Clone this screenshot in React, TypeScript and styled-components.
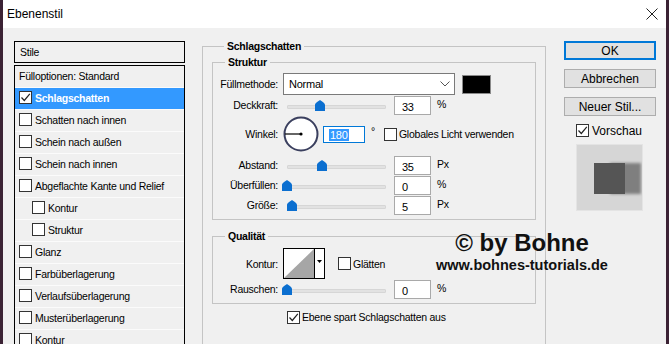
import React from "react";
import styled, {createGlobalStyle} from "styled-components";

const GlobalStyle = createGlobalStyle`
  html, body {
    margin: 0;
    padding: 0;
  }
  body {
    font-family: "Liberation Sans", Arial, sans-serif;
    background: #f0f0f0;
  }
`;

type StyleItem = {name: string, indent?: boolean, checked?: boolean, selected?: boolean};

const styleItems: StyleItem[] = [
  {name: "Schlagschatten", checked: true, selected: true},
  {name: "Schatten nach innen"},
  {name: "Schein nach außen"},
  {name: "Schein nach innen"},
  {name: "Abgeflachte Kante und Relief"},
  {name: "Kontur", indent: true},
  {name: "Struktur", indent: true},
  {name: "Glanz"},
  {name: "Farbüberlagerung"},
  {name: "Verlaufsüberlagerung"},
  {name: "Musterüberlagerung"},
  {name: "Kontur"},
];

const CheckBox = ({checked}: {checked?: boolean}) => (
  <StyledCheckBox>
    {checked && (
      <svg width="11" height="11" viewBox="0 0 11 11">
        <path d="M1.5 5.5 L4.3 8.5 L9.8 1.8" fill="none" stroke="#222" strokeWidth="1.2" />
      </svg>
    )}
  </StyledCheckBox>
);

const Slider = ({value}: {value: number}) => (
  <StyledSlider>
    <StyledTrack />
    <StyledThumb style={{left: 4 + value / 100 * 99 - 5}}>
      <svg width="10" height="11" viewBox="0 0 10 11">
        <path d="M5 0 C6.5 1 10 3 10 5 V11 H0 V5 C0 3 3.5 1 5 0 Z" fill="#0b6fd0" />
      </svg>
    </StyledThumb>
  </StyledSlider>
);

const SliderRow = ({label, value, unit}: {label: string, value: number, unit: string}) => (
  <StyledRow $height={20}>
    <StyledLabel>{label}</StyledLabel>
    <Slider value={value} />
    <StyledNumber>{value}</StyledNumber>
    <StyledUnit $top={3}>{unit}</StyledUnit>
  </StyledRow>
);

export default function App() {
  return (
    <StyledWindow>
      <GlobalStyle />
      <StyledEdge />
      <StyledDialog>
        <StyledTitleBar>
          <span>Ebenenstil</span>
          <svg width="12" height="12" viewBox="0 0 12 12">
            <path d="M0.5 0.5 L11.5 11.5 M11.5 0.5 L0.5 11.5" stroke="#222" strokeWidth="1" />
          </svg>
        </StyledTitleBar>
        <StyledBody>
          <StyledStyles>
            <StyledStylesHeader>Stile</StyledStylesHeader>
            <StyledList>
              <StyledListRow>Fülloptionen: Standard</StyledListRow>
              {styleItems.map((item, i) => (
                <StyledListRow key={i} $indent={item.indent} $selected={item.selected}>
                  <CheckBox checked={item.checked} />
                  {item.name}
                </StyledListRow>
              ))}
            </StyledList>
          </StyledStyles>

          <StyledMainGroup>
            <StyledLegend>Schlagschatten</StyledLegend>
            <StyledSubGroup $marginTop={2} $paddingTop={4}>
              <StyledLegend>Struktur</StyledLegend>
              <StyledRow $height={22}>
                <StyledLabel>Füllmethode:</StyledLabel>
                <StyledSelect>
                  Normal
                  <svg width="10" height="6" viewBox="0 0 10 6">
                    <path d="M0.5 0.5 L5 5 L9.5 0.5" fill="none" stroke="#555" strokeWidth="1" />
                  </svg>
                </StyledSelect>
                <StyledSwatch />
              </StyledRow>
              <SliderRow label="Deckkraft:" value={33} unit="%" />
              <StyledRow $height={36} $marginTop={1} $marginBottom={3}>
                <StyledLabel>Winkel:</StyledLabel>
                <StyledDial>
                  <svg width="36" height="36" viewBox="0 0 36 36">
                    <circle cx="18" cy="18" r="16.5" fill="#fff" stroke="#3a3f5e" strokeWidth="2" />
                    <path d="M2 18 H18" stroke="#000" strokeWidth="1.2" />
                    <circle cx="18" cy="18" r="1.6" fill="#000" />
                  </svg>
                </StyledDial>
                <StyledAngleInput>
                  <StyledSelection>180</StyledSelection>
                </StyledAngleInput>
                <StyledUnit $top={9}>°</StyledUnit>
                <StyledCheckLabel $marginLeft={9}>
                  <CheckBox />
                  Globales Licht verwenden
                </StyledCheckLabel>
              </StyledRow>
              <SliderRow label="Abstand:" value={35} unit="Px" />
              <SliderRow label="Überfüllen:" value={0} unit="%" />
              <SliderRow label="Größe:" value={5} unit="Px" />
            </StyledSubGroup>

            <StyledSubGroup $marginTop={9} $paddingTop={5}>
              <StyledLegend>Qualität</StyledLegend>
              <StyledRow $height={31}>
                <StyledLabel>Kontur:</StyledLabel>
                <svg width="42" height="31" viewBox="0 0 42 31">
                  <rect x="0.5" y="0.5" width="41" height="30" fill="#fff" stroke="#000" />
                  <polygon points="1,30 31,1 31,30" fill="#a6a6a6" />
                  <path d="M31.5 0.5 V30.5" stroke="#000" />
                  <polygon points="34,12 39,12 36.5,15" fill="#000" />
                </svg>
                <StyledCheckLabel $marginLeft={13}>
                  <CheckBox />
                  Glätten
                </StyledCheckLabel>
              </StyledRow>
              <SliderRow label="Rauschen:" value={0} unit="%" />
            </StyledSubGroup>

            <StyledCheckLabel $marginLeft={75} $marginTop={4}>
              <CheckBox checked />
              Ebene spart Schlagschatten aus
            </StyledCheckLabel>
          </StyledMainGroup>

          <StyledSide>
            <StyledButton $primary>OK</StyledButton>
            <StyledButton>Abbrechen</StyledButton>
            <StyledButton>Neuer Stil...</StyledButton>
            <StyledPreviewCheck>
              <CheckBox checked />
              Vorschau
            </StyledPreviewCheck>
            <StyledPreview>
              <svg width="65" height="65" viewBox="0 0 65 65">
                <defs>
                  <filter id="blur" x="-20%" y="-20%" width="140%" height="140%">
                    <feGaussianBlur stdDeviation="1.6" />
                  </filter>
                </defs>
                <rect x="0" y="0" width="65" height="65" fill="#d6d6d6" />
                <rect x="33" y="18" width="31" height="31" fill="#7f7f7f" filter="url(#blur)" />
                <rect x="17" y="18" width="31" height="31" fill="#555" />
              </svg>
            </StyledPreview>
          </StyledSide>

          <StyledWatermark>
            <StyledWatermarkTitle>© by Bohne</StyledWatermarkTitle>
            <StyledWatermarkUrl>www.bohnes-tutorials.de</StyledWatermarkUrl>
          </StyledWatermark>
        </StyledBody>
      </StyledDialog>
      <StyledEdge />
    </StyledWindow>
  );
}

const StyledWindow = styled.div`
  display: flex;
  width: 669px;
  height: 344px;
  overflow: hidden;
`;

const StyledEdge = styled.div`
  width: 3px;
  flex-shrink: 0;
  background: #3b2234;
`;

const StyledDialog = styled.div`
  flex: 1;
  display: flex;
  flex-direction: column;
  background: #f0f0f0;
`;

const StyledTitleBar = styled.div`
  height: 27px;
  flex-shrink: 0;
  background: #fff;
  display: flex;
  align-items: center;
  justify-content: space-between;
  padding: 0 8px 1px 4px;
  font-size: 12px;
  color: #000;
`;

const StyledBody = styled.div`
  position: relative;
  flex: 1;
  display: flex;
  align-items: flex-start;
  padding: 11px 0 0 11px;
  overflow: hidden;
  font-size: 10.5px;
  letter-spacing: -0.25px;
  color: #000;
`;

const StyledStyles = styled.div`
  width: 171px;
  margin-top: 2px;
  display: flex;
  flex-direction: column;
  gap: 2px;
`;

const StyledStylesHeader = styled.div`
  height: 20px;
  border: 1px solid #000;
  padding-left: 5px;
  display: flex;
  align-items: center;
`;

const StyledList = styled.div`
  border: 1px solid #000;
  border-bottom: none;
  height: 300px;
`;

const StyledListRow = styled.div<{$indent?: boolean, $selected?: boolean}>`
  box-sizing: border-box;
  height: 22px;
  padding-bottom: 2px;
  border-bottom: 1px solid #fbfbfb;
  display: flex;
  align-items: center;
  gap: 3px;
  padding-left: ${(x) => x.$indent ? 17 : 4}px;
  background: ${(x) => x.$selected ? "#3399ff" : "#f0f0f0"};
  color: ${(x) => x.$selected ? "#fff" : "#000"};
  font-weight: ${(x) => x.$selected ? "bold" : "normal"};
`;

const StyledCheckBox = styled.span`
  width: 11px;
  height: 11px;
  flex-shrink: 0;
  border: 1px solid #333;
  background: #fff;
  display: inline-flex;
  align-items: center;
  justify-content: center;
`;

const StyledMainGroup = styled.fieldset`
  box-sizing: border-box;
  width: 344px;
  height: 330px;
  margin: 0 0 0 17px;
  padding: 0 9px;
  border: 1px solid #c4c4c4;
  min-width: 0;
`;

const StyledSubGroup = styled.fieldset<{$marginTop: number, $paddingTop: number}>`
  margin: ${(x) => x.$marginTop}px 0 0 0;
  padding: ${(x) => x.$paddingTop}px 9px 4px 0;
  border: 1px solid #c4c4c4;
  min-width: 0;
`;

const StyledLegend = styled.legend`
  margin-left: 12px;
  padding: 0 3px;
  font-weight: bold;
  font-size: 10.5px;
  line-height: 14px;
`;

const StyledRow = styled.div<{$height: number, $marginTop?: number, $marginBottom?: number}>`
  height: ${(x) => x.$height}px;
  margin-top: ${(x) => x.$marginTop ?? 0}px;
  margin-bottom: ${(x) => x.$marginBottom ?? 0}px;
  display: flex;
  align-items: center;
`;

const StyledLabel = styled.div`
  width: 65px;
  margin-right: 5px;
  text-align: right;
  white-space: nowrap;
`;

const StyledSelect = styled.div`
  box-sizing: border-box;
  width: 172px;
  height: 22px;
  border: 1px solid #7a7a7a;
  background: #fff;
  display: flex;
  align-items: center;
  justify-content: space-between;
  padding: 0 4px 0 5px;
  font-size: 11px;
`;

const StyledSwatch = styled.div`
  width: 27px;
  height: 17px;
  margin-left: 7px;
  background: #000;
  border: 1px solid #8a8a8a;
`;

const StyledSlider = styled.div`
  position: relative;
  width: 107px;
  height: 20px;
`;

const StyledTrack = styled.div`
  position: absolute;
  left: 4px;
  right: 4px;
  top: 10px;
  height: 2px;
  background: #e2e2e2;
  border: 1px solid #d6d6d6;
  border-radius: 1px;
`;

const StyledThumb = styled.div`
  position: absolute;
  top: 5px;
  width: 10px;
  height: 11px;
  display: flex;
`;

const StyledNumber = styled.div`
  box-sizing: border-box;
  width: 37px;
  height: 19px;
  margin-left: 4px;
  border: 1px solid #a9a9a9;
  background: #fff;
  padding: 4px 0 0 7px;
  font-size: 11px;
`;

const StyledUnit = styled.div<{$top: number}>`
  margin-left: 6px;
  align-self: flex-start;
  padding-top: ${(x) => x.$top}px;
  font-size: 10.5px;
`;

const StyledDial = styled.div`
  width: 36px;
  height: 36px;
  display: flex;
`;

const StyledAngleInput = styled.div`
  box-sizing: border-box;
  width: 42px;
  height: 17px;
  margin-left: 4px;
  border: 1px solid #0078d7;
  background: #fff;
  padding: 2px 0 0 5px;
  font-size: 11px;
  display: flex;
  align-items: flex-start;
`;

const StyledSelection = styled.span`
  background: #3399ff;
  color: #fff;
  line-height: 12px;
  padding: 0 1px;
`;

const StyledCheckLabel = styled.div<{$marginLeft: number, $marginTop?: number}>`
  display: flex;
  align-items: center;
  gap: 2px;
  margin-left: ${(x) => x.$marginLeft}px;
  margin-top: ${(x) => x.$marginTop ?? 0}px;
  height: 18px;
  white-space: nowrap;
  align-self: ${(x) => x.$marginTop === undefined ? "auto" : "flex-start"};
`;

const StyledSide = styled.div`
  width: 92px;
  margin: 2px 0 0 18px;
  display: flex;
  flex-direction: column;
  gap: 9px;
  font-size: 12px;
  letter-spacing: 0;
`;

const StyledButton = styled.div<{$primary?: boolean}>`
  box-sizing: border-box;
  height: 19px;
  background: #e1e1e1;
  border: ${(x) => x.$primary ? "2px solid #0078d7" : "1px solid #adadad"};
  display: flex;
  align-items: center;
  justify-content: center;
  color: #000;
`;

const StyledPreviewCheck = styled.div`
  display: flex;
  align-items: center;
  gap: 3px;
  margin: -2px 0 0 12px;
  height: 15px;
`;

const StyledPreview = styled.div`
  width: 65px;
  height: 65px;
  margin: -2px 0 0 13px;
  display: flex;
  outline: 1px solid #e4e4e4;
`;

const StyledWatermark = styled.div`
  position: absolute;
  left: 419px;
  top: 202px;
  width: 200px;
  display: flex;
  flex-direction: column;
  align-items: center;
  color: #111;
  font-family: "Liberation Sans", Arial, sans-serif;
  font-weight: bold;
  letter-spacing: 0;
`;

const StyledWatermarkTitle = styled.div`
  font-size: 24px;
  line-height: 26px;
`;

const StyledWatermarkUrl = styled.div`
  font-size: 14.5px;
  line-height: 18px;
`;
